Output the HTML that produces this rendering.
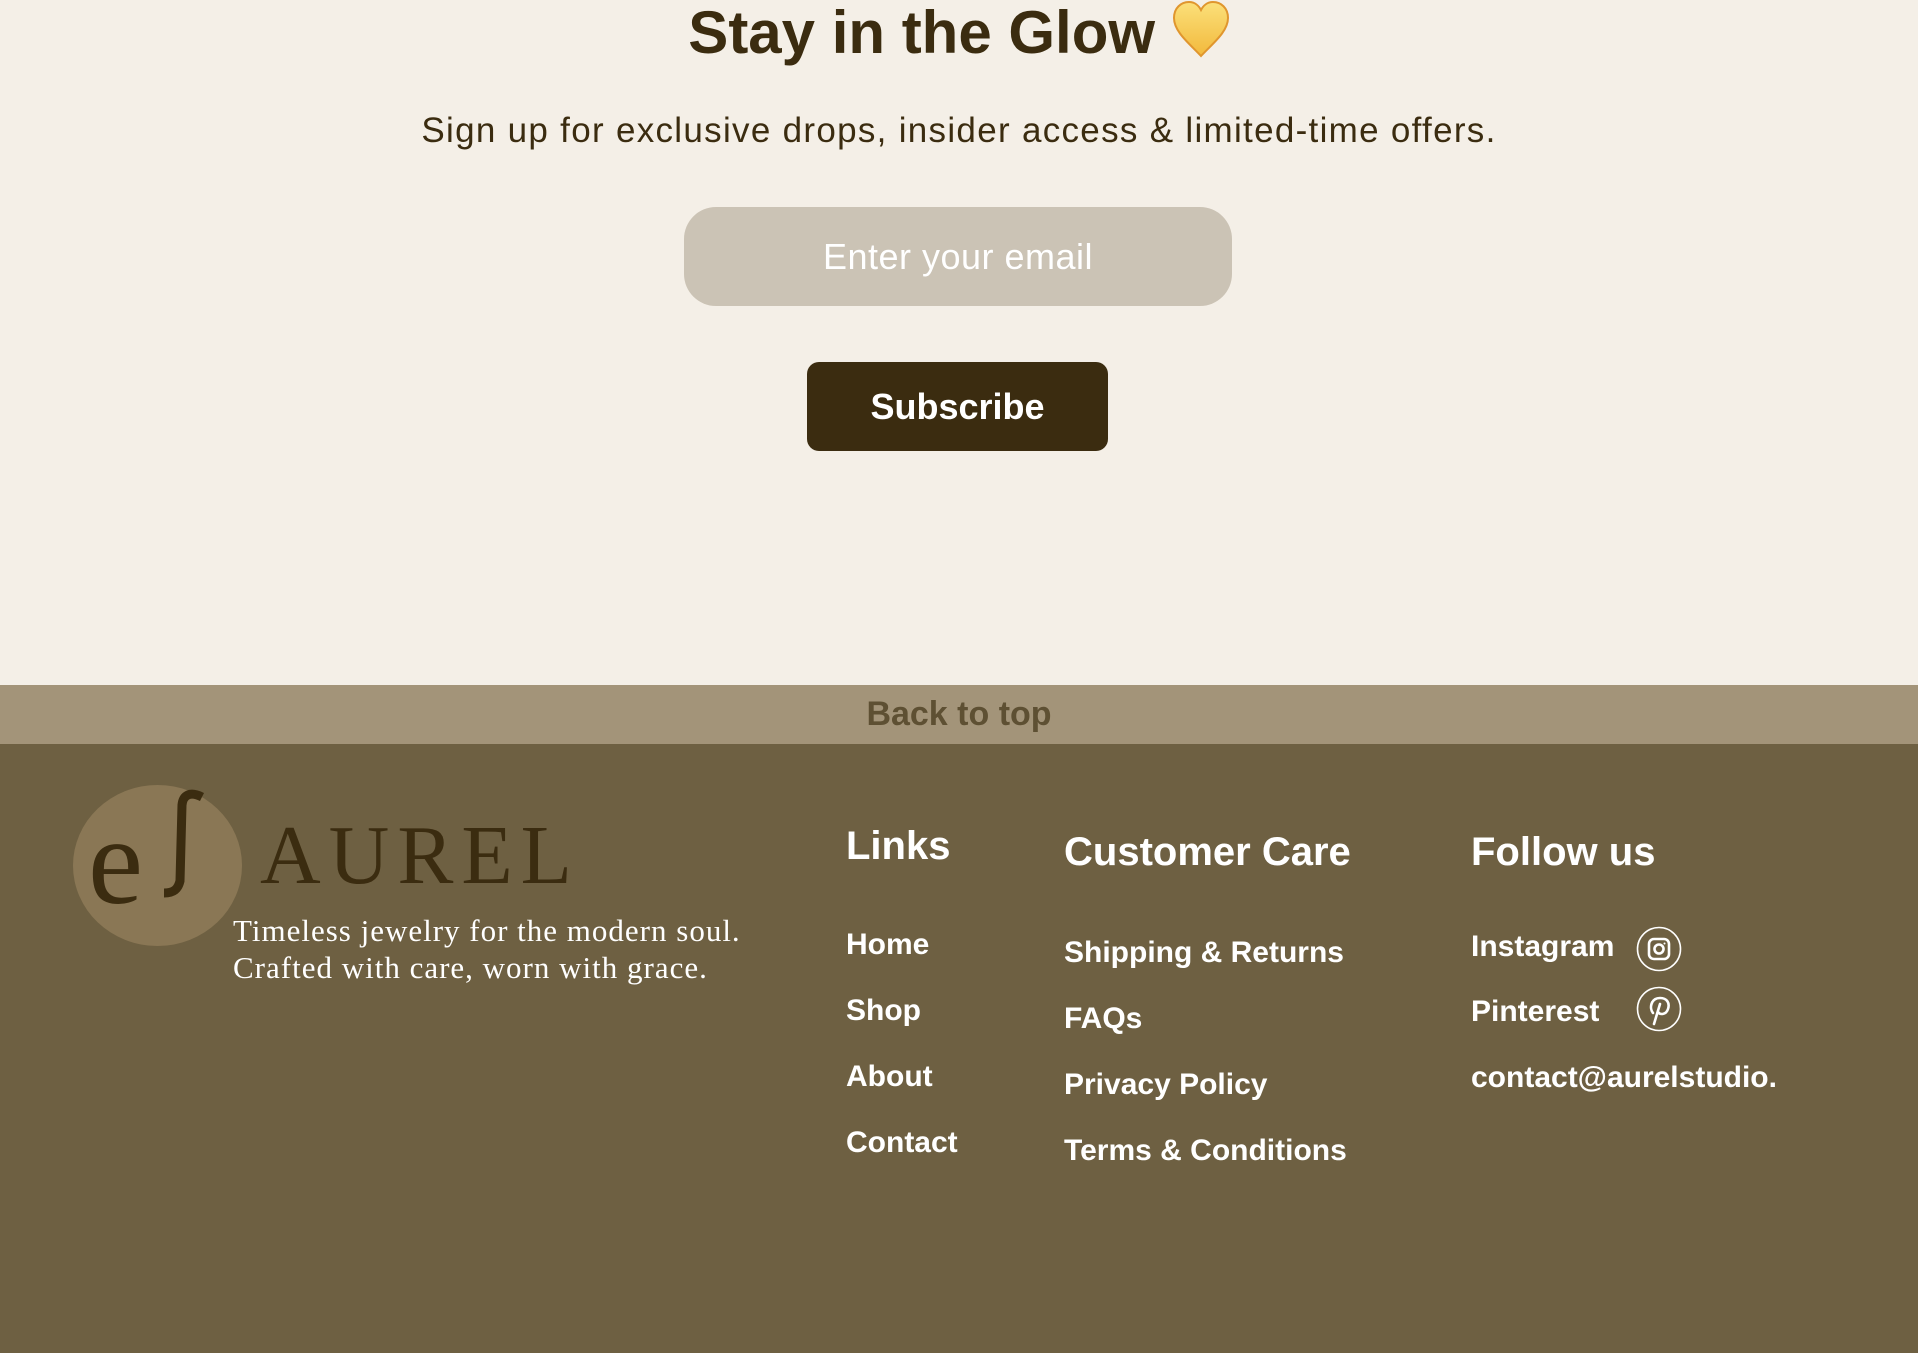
<!DOCTYPE html>
<html><head><meta charset="utf-8"><style>
*{margin:0;padding:0;box-sizing:border-box}
body{width:1922px;height:1354px;background:#fff;position:relative;overflow:hidden;font-family:"Liberation Sans",sans-serif}
.top{position:absolute;left:0;top:0;width:1918px;height:685px;background:#f4efe7}
.bar{position:absolute;left:0;top:685px;width:1918px;height:59px;background:#a39479;color:#5e5033;font-weight:bold;font-size:34px;text-align:center;line-height:59px}
.foot{position:absolute;left:0;top:744px;width:1918px;height:609px;background:#6e6042}
.t{position:absolute;line-height:1;white-space:nowrap}
.w{color:#fff;font-weight:bold}
</style></head><body>
<div class="top"></div>
<div class="t" style="left:0;width:1918px;text-align:center;top:3px;font-size:60px;font-weight:bold;color:#3b2c10">Stay in the Glow <span style="display:inline-block;width:58px"></span></div>
<svg style="position:absolute;left:1170px;top:0" width="62" height="60" viewBox="0 0 62 60"><defs><linearGradient id="g" x1="0" y1="0" x2="0" y2="1"><stop offset="0" stop-color="#fbe07a"/><stop offset="1" stop-color="#f2b93c"/></linearGradient></defs><path d="M31 56 C20 44 4 32 4 18 C4 8 11 2 19 2 C25 2 29 6 31 10 C33 6 37 2 43 2 C51 2 58 8 58 18 C58 32 42 44 31 56Z" fill="url(#g)" stroke="#e0962e" stroke-width="2"/></svg>
<div class="t" style="left:0;width:1918px;text-align:center;top:113px;font-size:35px;color:#3b2c10;letter-spacing:1.3px">Sign up for exclusive drops, insider access &amp; limited-time offers.</div>
<div style="position:absolute;left:684px;top:207px;width:548px;height:99px;border-radius:32px;background:#cbc3b5;color:#fff;font-size:36px;text-align:center;line-height:99px;letter-spacing:0.5px">Enter your email</div>
<div style="position:absolute;left:807px;top:362px;width:301px;height:89px;border-radius:12px;background:#3b2c10;color:#fff;font-size:36px;font-weight:bold;text-align:center;line-height:89px">Subscribe</div>
<div class="bar">Back to top</div>
<div class="foot"></div>
<div style="position:absolute;left:73px;top:785px;width:169px;height:161px;border-radius:50%;background:#8a7755"></div>
<div class="t" style="left:88px;top:800px;font-size:124px;font-family:'Liberation Serif',serif;color:#3b2c10">e</div>
<svg style="position:absolute;left:150px;top:785px" width="60" height="115" viewBox="0 0 60 115"><path d="M14 108 C24 108 28 104 30 96 L32 20 C33 10 40 6 52 12" fill="none" stroke="#3b2c10" stroke-width="9"/></svg>
<div class="t" style="left:260px;top:814px;font-size:84px;font-family:'Liberation Serif',serif;color:#3b2c10;letter-spacing:8px">AUREL</div>
<div class="t" style="left:233px;top:912px;font-size:31px;font-family:'Liberation Serif',serif;color:#fff;line-height:37px;letter-spacing:1px">Timeless jewelry for the modern soul.<br>Crafted with care, worn with grace.</div>
<div class="t w" style="left:846px;top:826px;font-size:40px">Links</div>
<div class="t w" style="left:846px;top:930px;font-size:30px">Home</div>
<div class="t w" style="left:846px;top:996px;font-size:30px">Shop</div>
<div class="t w" style="left:846px;top:1062px;font-size:30px">About</div>
<div class="t w" style="left:846px;top:1128px;font-size:30px">Contact</div>
<div class="t w" style="left:1064px;top:832px;font-size:40px">Customer Care</div>
<div class="t w" style="left:1064px;top:938px;font-size:30px">Shipping &amp; Returns</div>
<div class="t w" style="left:1064px;top:1004px;font-size:30px">FAQs</div>
<div class="t w" style="left:1064px;top:1070px;font-size:30px">Privacy Policy</div>
<div class="t w" style="left:1064px;top:1136px;font-size:30px">Terms &amp; Conditions</div>
<div class="t w" style="left:1471px;top:832px;font-size:40px">Follow us</div>
<div class="t w" style="left:1471px;top:932px;font-size:30px">Instagram</div>
<div class="t w" style="left:1471px;top:997px;font-size:30px">Pinterest</div>
<div class="t w" style="left:1471px;top:1063px;font-size:30px">contact@aurelstudio.</div>
<svg style="position:absolute;left:1636px;top:926px" width="46" height="46" viewBox="0 0 46 46" fill="none" stroke="#fff"><circle cx="23" cy="23" r="21.5" stroke-width="1.6"/><rect x="13" y="13" width="20" height="20" rx="5" stroke-width="2.6"/><circle cx="23" cy="23" r="4.5" stroke-width="2.6"/><circle cx="28.5" cy="17.5" r="1" fill="#fff" stroke="none"/></svg>
<svg style="position:absolute;left:1636px;top:986px" width="46" height="46" viewBox="0 0 46 46" fill="none" stroke="#fff"><circle cx="23" cy="23" r="21.5" stroke-width="1.6"/><path d="M17 27 C13 22 15 12 24 12 C31 12 34 17 32 23 C30 29 24 29 22 26 M24 18 L18 38" stroke-width="2.6" stroke-linecap="round"/></svg>
</body></html>
